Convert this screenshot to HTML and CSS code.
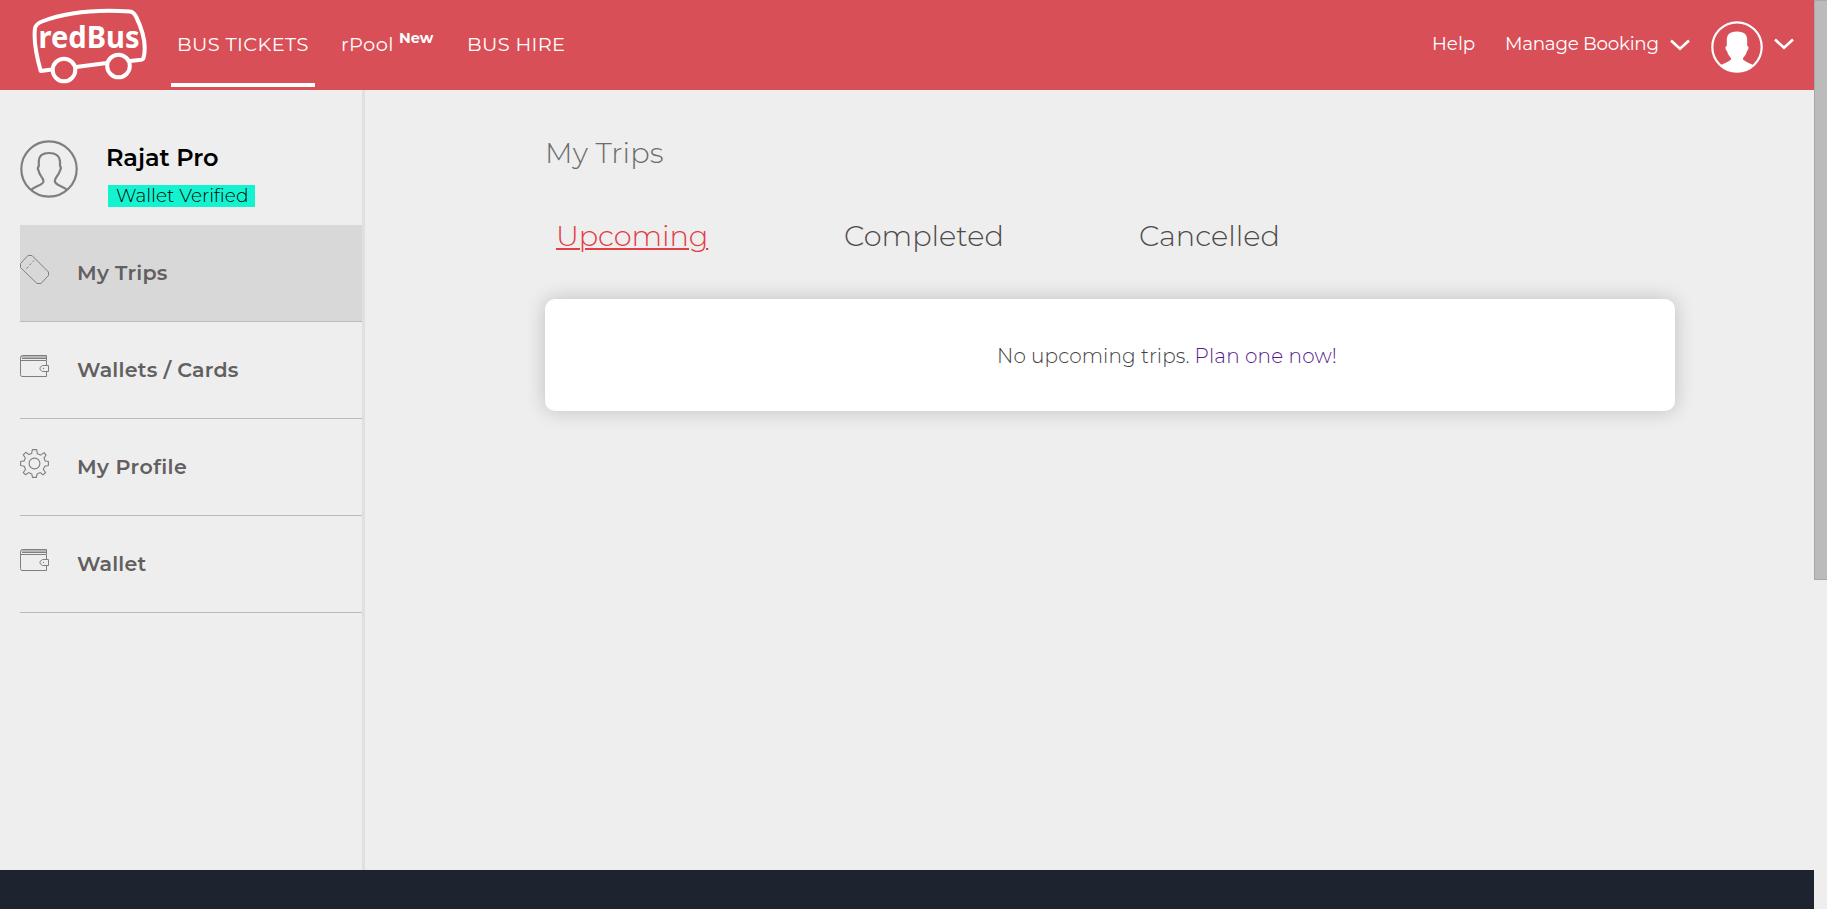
FILE: index.html
```
<!DOCTYPE html>
<html lang="en">
<head>
<meta charset="utf-8">
<title>My Trips</title>
<link rel="stylesheet" href="styles.css">
</head>
<body>
<svg class="defs" width="0" height="0" aria-hidden="true">
  <symbol id="chevron" viewBox="0 0 20 12"><path d="M1 1.500 10 9.700 19 1.500" fill="none" stroke="#fff" stroke-width="2.700"/></symbol>
  <symbol id="wallet" viewBox="0 0 29 29"><g transform="translate(0 2)"><g fill="none" stroke="#7f7f7f"><path d="M26.500 6V1.500H2.500Q.5 1.500.5 3.500V20.500Q.5 22.500 2 22.500H26.500V18"/><path d="M2 4.500H26.500M1.500 3H26.500M1 6.500H26.500V11"/><path d="M28.500 11.500H22.500L20 13.500V15.500L22.500 17.500H28.500Z"/></g><circle cx="23.500" cy="14.500" r=".7" fill="#7f7f7f"/></g></symbol>
</svg>
<div class="window">
  <div class="page">
    <header class="topbar">
      <svg class="logo" viewBox="0 0 116 90" fill="none" stroke="#fff" stroke-width="4" stroke-linejoin="round">
        <path d="M20 69.500 8.700 71Q1 44 3 28Q4 24 10 21.500Q45 8 98 11.500Q101 11.500 104 16.500Q116 41 111.500 58Q111 60 107 60L98 61M75 63 44 67"/>
        <circle cx="32" cy="70" r="11.300"/><circle cx="86.500" cy="66" r="11.300"/>
        <text x="6.500" y="47.500" textLength="101" lengthAdjust="spacingAndGlyphs" class="logo-text">redBus</text>
      </svg>
      <nav class="links">
        <a class="link active">BUS TICKETS</a>
        <a class="link pool">rPool<b>New</b></a>
        <a class="link hire">BUS HIRE</a>
      </nav>
      <nav class="account">
        <a class="help">Help</a>
        <a class="manage">Manage Booking</a>
        <svg class="chevron chevron-menu"><use href="#chevron"/></svg>
        <svg class="user" viewBox="0 0 52 52"><circle cx="26" cy="26" r="24.700" fill="none" stroke="#fff" stroke-width="2.200"/><path fill="#fff" d="M26 10.500C34 10.500 36.300 14 36.200 20V25C38.400 25.500 37.500 29 36 30C35.500 33 33 36 32 37V38.500C35 41.500 39 42 43 44.500Q36 51 26 51T9 44.500C13 42 17 41.500 20 38.500V37C19 36 16.500 33 16 30C14.500 29 13.600 25.500 15.800 25V20C15.700 14 18 10.500 26 10.500Z"/></svg>
        <svg class="chevron chevron-user"><use href="#chevron"/></svg>
      </nav>
    </header>
    <div class="body">
      <aside class="sidebar">
        <div class="profile">
          <svg class="avatar" viewBox="0 0 58 58" fill="none" stroke="#7f7f7f" stroke-width="2.200"><circle cx="29" cy="29" r="27.700"/><path d="M11 50C15 46 24 45 23.500 41C23 37 19.500 36 18.500 30.500C17.500 29 18 27 18.800 26V21Q19 13 29 13T40 21V26C41 27 41 29 40 30.500C38.500 36 35 37 34.800 41C34.500 45 43 46 47.500 50"/></svg>
          <div class="who"><span class="name">Rajat Pro</span><span class="badge">Wallet Verified</span></div>
        </div>
        <a class="item selected"><svg class="ico" viewBox="0 0 29 29" fill="none" stroke="#7f7f7f"><path d="M.5 8.500 8 .5H12L28.500 17V20.500L21 28.500H17L.5 12.500Z"/><path d="M6.500 13.500 14 5.500" stroke-dasharray="2.500 2"/></svg><span class="trips">My Trips</span></a>
        <a class="item"><svg class="ico"><use href="#wallet"/></svg><span class="cards">Wallets / Cards</span></a>
        <a class="item"><svg class="ico" viewBox="0 0 29 29" fill="none" stroke="#7f7f7f" stroke-width="1.100" stroke-linejoin="round"><path d="M12.300.600H16.700L17.300 4.800 20.600 6.100 24 3.600 26 6.100 24 9 25.200 12 28.400 12.500V16.500L24.700 17.200 23.300 20.500 25.600 23.500 23 25.900 20.300 23.600 17 24.900 16.500 28.400H12.500L11.800 24.900 8.600 23.600 5.600 25.800 3.300 23.500 5.500 20.500 4.200 17.200.600 16.500V12.500L4.200 11.900 5.300 9 3.200 5.800 5.800 3.300 8.800 5.600 11.700 4.500Z"/><circle cx="14.500" cy="14.500" r="5.400"/></svg><span class="prof">My Profile</span></a>
        <a class="item"><svg class="ico"><use href="#wallet"/></svg><span class="wal">Wallet</span></a>
      </aside>
      <main class="content">
        <h1 class="title">My Trips</h1>
        <div class="tabs"><a class="tab tab-active">Upcoming</a><a class="tab">Completed</a><a class="tab">Cancelled</a></div>
        <div class="card"><span>No upcoming trips.</span><a class="plan">Plan one now!</a></div>
      </main>
    </div>
    <footer class="footer"></footer>
  </div>
  <div class="scroll"><div class="thumb"></div></div>
</div>
</body>
</html>
```
FILE: styles.css
```
* { box-sizing: border-box; }
body { margin: 0; font-family: Montserrat, Inter, "Open Sans", sans-serif; background: #eee; overflow: hidden; }
.defs { position: absolute; }
.window { display: flex; height: 909px; }
.page { width: 1814px; display: flex; flex-direction: column; flex: none; }

.topbar { height: 90px; background: #d84f57; display: flex; color: #fff; font-size: 19.400px; line-height: 24px; white-space: nowrap; }
.logo { width: 116px; height: 90px; margin-left: 32px; flex: none; }
.logo-text { font: bold 31px "Noto Sans", sans-serif; fill: #fff; stroke: none; }
.links { display: flex; margin-left: 23px; }
.link { padding: 32px 0 0; height: 87px; }
.active { border-bottom: 4px solid #fff; width: 144px; padding-left: 6px; letter-spacing: .400px; }
.pool { margin-left: 26px; width: 126px; letter-spacing: .450px; }
.pool b { display: inline-block; font-size: 14.500px; line-height: 12px; vertical-align: 8px; margin-left: 5px; letter-spacing: 0; }
.hire { letter-spacing: .350px; }
.account { display: flex; margin-left: auto; padding-top: 32px; font-size: 18.300px; }
.help { width: 73px; }
.manage { width: 165px; letter-spacing: -.250px; }
.chevron { width: 20px; height: 12px; }
.chevron-menu { margin: 7px 21px 0 0; }
.user { width: 52px; height: 52px; margin-top: -11px; }
.chevron-user { margin: 6px 20px 0 11px; }

.body { display: flex; height: 780px; }
.sidebar { width: 365px; border-right: 3px solid #e0e0e0; padding-left: 20px; flex: none; }
.profile { height: 135px; display: flex; padding-top: 50px; white-space: nowrap; }
.avatar { width: 58px; height: 58px; }
.who { display: flex; flex-direction: column; align-items: flex-start; margin-left: 28px; }
.name { font-size: 24px; font-weight: 600; line-height: 36px; letter-spacing: -.050px; }
.badge { background: #14f3d0; font-size: 18.600px; font-weight: 300; line-height: 22px; padding-left: 8px; margin: 9px 0 0 2px; width: 147px; }
.item { display: flex; align-items: center; height: 97px; padding-bottom: 2px; border-bottom: 1px solid #bbb; font-size: 20.600px; font-weight: 600; color: #625f5f; }
.selected { background: #d8d8d8; }
.ico { width: 29px; height: 29px; margin: 30px 28px 0 0; align-self: flex-start; }
.trips { letter-spacing: .250px; }
.cards { letter-spacing: .220px; }
.prof { letter-spacing: .420px; }
.wal { letter-spacing: .150px; }

.content { padding: 46px 0 0 180px; font-weight: 300; }
.title { margin: 0; font-size: 28.800px; line-height: 34px; font-weight: 300; color: #6c6c6c; letter-spacing: .100px; }
.tabs { display: flex; font-size: 28.800px; line-height: 34px; margin-top: 49px; padding-left: 11px; color: #4f4a4a; }
.tab { width: 295px; }
.tab-active { width: 288px; color: #e33d45; text-decoration: underline 2px; text-underline-offset: 2px; letter-spacing: -.100px; }
.card { display: flex; align-items: center; width: 1130px; height: 112px; margin-top: 46px; padding: 2px 0 0 452px; background: #fff; border-radius: 10px; box-shadow: 0 0 20px rgba(0, 0, 0, .2); font-size: 20px; letter-spacing: .100px; color: #3e3e3e; }
.plan { margin-left: 5px; color: #551a8b; letter-spacing: .150px; }

.footer { height: 39px; background: #1d2430; }
.scroll { width: 13px; background: #eee; }
.thumb { height: 580px; background: #bbb; border: 1px solid #a8a8a8; border-right: 0; }
```
